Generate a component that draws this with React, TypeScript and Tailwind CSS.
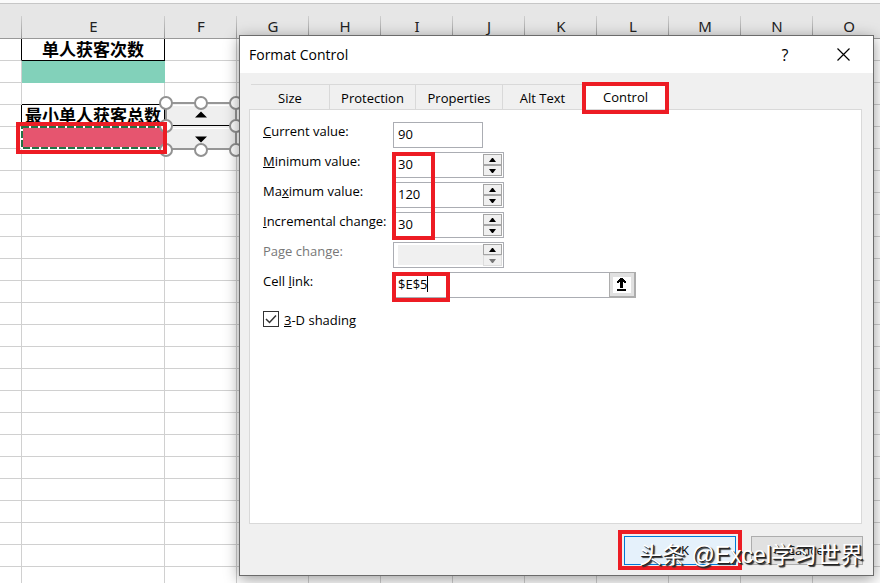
import { useState } from 'react'
import type { ReactNode } from 'react'

const COLUMNS = ['F', 'G', 'H', 'I', 'J', 'K', 'L', 'M', 'N', 'O']
const ROWS = Array.from({ length: 26 }, (_, i) => i)
const TABS = [
  { name: 'Size', width: 'w-[79px]' },
  { name: 'Protection', width: 'w-[86px]' },
  { name: 'Properties', width: 'w-[87px]' },
  { name: 'Alt Text', width: 'w-[80px]' },
  { name: 'Control', width: 'w-[85px]' },
]

// Red annotation box, placed over whatever it marks
function Marker({ className }: { className: string }) {
  return <span className={`pointer-events-none absolute border-[#ed1c24] ${className}`} />
}

function SpinnerObject() {
  const handles = [
    [8, 8], [43, 8], [78, 8], [8, 31], [78, 31], [8, 55], [43, 55], [78, 55],
  ]
  return (
    <svg className="absolute -top-2.5 -left-[7px] z-10" width="86" height="63" viewBox="0 0 86 63">
      <rect x="8" y="8" width="70" height="46" fill="#efefef" />
      <path d="M8 10.5H78M8 33.500H78" stroke="#fff" />
      <path d="M8 30.500H78" stroke="#000" />
      <rect x="8" y="8" width="70" height="46" fill="none" stroke="#969696" strokeWidth="2" />
      <path d="M37 22.500h12l-6-6zM37 41.500h12l-6 6z" fill="#000" />
      {handles.map(([x, y]) => (
        <circle key={`${x}-${y}`} cx={x} cy={y} r="6" fill="#fff" stroke="#929292" strokeWidth="2" />
      ))}
    </svg>
  )
}

function ActiveCell() {
  return (
    <>
      <svg className="absolute top-0 left-0 h-full w-full overflow-visible">
        <rect width="100%" height="100%" fill="none" stroke="#fff" strokeWidth="2" />
        <rect
          width="100%"
          height="100%"
          fill="none"
          stroke="#217346"
          strokeWidth="2"
          strokeDasharray="7 2"
        />
      </svg>
      <Marker className="-top-[5px] -right-[3px] -bottom-[6px] -left-[6px] z-20 border-4" />
    </>
  )
}

function Sheet() {
  const titles: Record<number, string> = { 0: '单人获客次数', 3: '最小单人获客总数' }

  function cellClass(row: number) {
    if (row === 0) return 'border-black bg-white'
    if (row === 1) return 'border-[#82d1ba] bg-[#82d1ba]'
    if (row === 2) return 'border-r-[#d0d0d0] border-b-black'
    if (row === 3) return 'border-black bg-white'
    if (row === 4) return 'border-[#d0d0d0] bg-[#e6556f]'
    return 'border-[#d0d0d0]'
  }

  return (
    <table className="w-[885px] min-w-full table-fixed border-separate border-spacing-0">
      <colgroup>
        <col className="w-[22px]" />
        <col className="w-[143px]" />
        {COLUMNS.map((c) => (
          <col key={c} className="w-[72px]" />
        ))}
      </colgroup>
      <thead>
        <tr className="bg-[#e6e6e6]">
          {['', 'E', ...COLUMNS].map((c) => (
            <th
              key={c}
              className="relative h-[35px] border-b border-[#999] p-0 pt-2.5 text-[15px] leading-5 font-normal text-[#222]"
            >
              {c}
              <span className="absolute right-0 bottom-0 h-[22px] w-px bg-linear-to-b from-[#cfcfcf] to-[#999]" />
            </th>
          ))}
        </tr>
      </thead>
      <tbody>
        {ROWS.map((row) => (
          <tr key={row}>
            <td
              className={`h-[22px] border-r border-b border-b-[#d0d0d0] p-0 ${
                row === 0 || row === 3 ? 'border-r-black' : 'border-r-[#d0d0d0]'
              }`}
            />
            <td
              className={`relative h-[22px] border-r border-b p-0 text-center text-[17px] leading-5 font-bold whitespace-nowrap ${cellClass(row)}`}
            >
              {titles[row]}
              {row === 4 && <ActiveCell />}
            </td>
            {COLUMNS.map((c) => (
              <td key={c} className="relative h-[22px] border-r border-b border-[#d0d0d0] p-0">
                {row === 3 && c === 'F' && <SpinnerObject />}
              </td>
            ))}
          </tr>
        ))}
      </tbody>
    </table>
  )
}

function StepButton({ up, label, disabled }: { up?: boolean; label: string; disabled?: boolean }) {
  return (
    <button
      type="button"
      aria-label={label}
      disabled={disabled}
      className={`flex h-[11px] w-[19px] items-center justify-center border bg-[#f0f0f0] ${
        disabled ? 'border-[#dcdcdc] text-[#777]' : 'border-[#a5a5a5] text-black'
      }`}
    >
      <svg width="7" height="4" viewBox="0 0 7 4" fill="currentColor">
        <path d={up ? 'M0 4h7L4 0H3z' : 'M0 0h7L4 4H3z'} />
      </svg>
    </button>
  )
}

interface FieldProps {
  id: string
  label: ReactNode
  disabled?: boolean
  children: ReactNode
}

function Field({ id, label, disabled, children }: FieldProps) {
  return (
    <div className="flex h-[26px]">
      <label htmlFor={id} className={`w-[130px] leading-[18px] ${disabled ? 'text-[#777]' : ''}`}>
        {label}
      </label>
      {children}
    </div>
  )
}

interface NumberBoxProps {
  id: string
  value?: string
  disabled?: boolean
}

function NumberBox({ id, value, disabled }: NumberBoxProps) {
  return (
    <div className="flex w-[111px] border border-[#abadb3] bg-white p-px">
      <input
        id={id}
        defaultValue={value}
        disabled={disabled}
        className={`min-w-0 flex-1 outline-none ${disabled ? 'my-px ml-[3px] bg-[#f0f0f0]' : 'pl-[3px]'}`}
      />
      <div className="flex flex-col">
        <StepButton up label={`Increase ${id}`} />
        <StepButton label={`Decrease ${id}`} disabled={disabled} />
      </div>
    </div>
  )
}

function ControlPanel() {
  return (
    <form className="flex flex-col gap-1 pt-3 pl-[13px]">
      <Field id="current" label={<><u>C</u>urrent value:</>}>
        <input
          id="current"
          defaultValue="90"
          className="w-[90px] border border-[#abadb3] pl-1 outline-none"
        />
      </Field>
      <div className="relative flex flex-col gap-1">
        <Field id="minimum" label={<><u>M</u>inimum value:</>}>
          <NumberBox id="minimum" value="30" />
        </Field>
        <Field id="maximum" label={<>Ma<u>x</u>imum value:</>}>
          <NumberBox id="maximum" value="120" />
        </Field>
        <Field id="increment" label={<><u>I</u>ncremental change:</>}>
          <NumberBox id="increment" value="30" />
        </Field>
        <Marker className="top-0 -bottom-0.5 left-[129px] w-[43px] border-4" />
      </div>
      <Field id="page" label="Page change:" disabled>
        <NumberBox id="page" disabled />
      </Field>
      <Field id="link" label={<>Cell <u>l</u>ink:</>}>
        <div className="relative flex w-[243px]">
          <input
            id="link"
            defaultValue="$E$5"
            className="min-w-0 flex-1 border border-r-0 border-[#abadb3] pl-1 outline-none"
          />
          <button
            type="button"
            aria-label="Collapse dialog"
            className="flex w-[27px] items-center justify-center border border-r-2 border-b-2 border-[#adadad] bg-[#e1e1e1]"
          >
            <svg width="18" height="16" viewBox="0 0 18 16" shapeRendering="crispEdges">
              <path d="M0 0h18v16H0z" fill="#fff" />
              <path
                d="M7 1h3v1h1v1h1v1h1v2h-2V5h-1v6H7V5H6v1H4V4h1V3h1V2h1zM4 12h9v2H4z"
                fill="#000"
              />
            </svg>
          </button>
          <span className="absolute top-1 left-[34px] h-4 w-px bg-black" />
          <Marker className="top-0 -bottom-1 -left-px w-[58px] border-4" />
        </div>
      </Field>
      <label className="mt-2 flex items-center gap-[5px] leading-4">
        <span className="relative flex h-4 w-4">
          <input
            type="checkbox"
            defaultChecked
            className="peer h-4 w-4 appearance-none border border-[#333] bg-white"
          />
          <svg
            className="pointer-events-none absolute inset-0 hidden peer-checked:block"
            width="16"
            height="16"
            viewBox="0 0 16 16"
          >
            <path d="M3 8l3.500 3.500L13 4.500" fill="none" stroke="#333" strokeWidth="1.500" />
          </svg>
        </span>
        <span className="pt-0.5"><u>3</u>-D shading</span>
      </label>
    </form>
  )
}

function FormatControlDialog() {
  const [tab, setTab] = useState('Control')

  return (
    <div
      role="dialog"
      aria-labelledby="dialog-title"
      className="absolute top-[35px] right-[6px] bottom-[7px] left-[239px] z-30 flex flex-col border border-[#6b6b6b] bg-[#f0f0f0] font-['Open_Sans',sans-serif] text-[13px] text-black shadow-[0_3px_14px_rgba(0,0,0,0.4)]"
    >
      <header className="flex h-[37px] items-center bg-white pr-[22px] pl-[9px]">
        <h1 id="dialog-title" className="flex-1 text-sm">Format Control</h1>
        <button type="button" aria-label="Help" className="w-8 text-base">?</button>
        <button type="button" aria-label="Close" className="ml-[34px] flex w-4 justify-center">
          <svg width="13" height="13" viewBox="0 0 13 13" stroke="#000" strokeWidth="1.200">
            <path d="M.5.5l12 12M12.500.5l-12 12" />
          </svg>
        </button>
      </header>

      <div role="tablist" className="mt-[11px] ml-[11px] flex h-[25px]">
        {TABS.map(({ name, width }) => (
          <button
            key={name}
            type="button"
            role="tab"
            aria-selected={tab === name}
            onClick={() => setTab(name)}
            className={`relative ${width} ${
              tab === name ? 'z-10 bg-white pt-0.5' : 'border-t border-r border-[#d9d9d9] pt-1'
            }`}
          >
            {name}
            {name === 'Control' && <Marker className="-inset-x-px -top-0.5 -bottom-[5px] border-4" />}
          </button>
        ))}
      </div>
      <div role="tabpanel" className="mr-[11px] ml-[9px] flex-1 border border-[#d9d9d9] bg-white">
        {tab === 'Control' && <ControlPanel />}
      </div>

      <footer className="flex h-[51px] justify-end gap-[15px] pt-3 pr-[10px]">
        <div className="relative h-[29px] w-[112px]">
          <button type="button" className="h-full w-full border border-[#0078d7] bg-[#e5f1fb]">
            OK
          </button>
          <Marker className="-inset-x-[6px] -top-[6px] -bottom-[5px] border-4" />
        </div>
        <button type="button" className="h-[29px] w-[112px] border border-[#adadad] bg-[#e1e1e1]">
          Cancel
        </button>
      </footer>
    </div>
  )
}

export default function App() {
  return (
    <main className="relative h-screen overflow-hidden bg-white font-['Noto_Sans','Noto_Sans_CJK_SC',sans-serif]">
      <div className="h-1 border-b border-[#c6c6c6] bg-[#fafafa]" />
      <Sheet />
      <FormatControlDialog />
      <p className="pointer-events-none absolute right-[17px] bottom-3 z-40 font-['Liberation_Sans','Noto_Sans_CJK_SC',sans-serif] text-[23px] leading-8 whitespace-nowrap text-white [text-shadow:1px_1px_0_#222,2px_2px_1px_#333]">
        头条 @Excel学习世界
      </p>
    </main>
  )
}
